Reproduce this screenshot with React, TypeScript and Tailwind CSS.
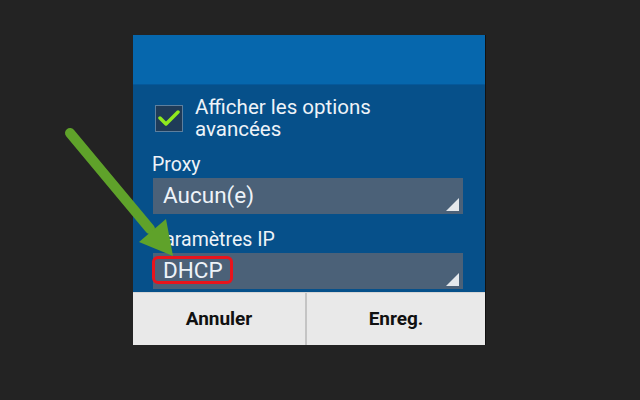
import React from 'react';

const Corner: React.FC = () => (
  <svg className="absolute right-[4px] bottom-[3px]" width="13" height="13" viewBox="0 0 13 13">
    <polygon points="13,0 13,13 0,13" fill="#e4e8ec" />
  </svg>
);

const App: React.FC = () => {
  return (
    <div
      className="relative w-[640px] h-[400px] bg-[#232323] pt-[35px] pl-[133px]"
      style={{ fontFamily: 'Roboto, "Noto Sans", sans-serif' }}
    >
      <div className="w-[352px] flex flex-col shadow-[1px_0_0_#111]">
        <div className="h-[50px] bg-[#0667ad] border-b border-[#05589a]" />
        <div className="h-[207px] bg-[#06508a] px-[20px] pt-[11px] flex flex-col text-[#eef3f8]">
          <div className="flex items-center h-[44px]">
            <div className="w-[28px] h-[27px] ml-[2px] bg-[#1f3b58] border border-[#5d7f9e] flex items-center justify-center">
              <svg width="22" height="18" viewBox="0 0 22 18">
                <polyline points="2,9 8,15 20,3" fill="none" stroke="#8fea1e" strokeWidth="3.5" strokeLinecap="round" strokeLinejoin="round" />
              </svg>
            </div>
            <div className="ml-[12px] text-[20.5px] leading-[22px]">
              Afficher les options
              <br />
              avancées
            </div>
          </div>
          <div className="mt-[15px] h-[20px] text-[19.5px] leading-[20px] -ml-[1px]">Proxy</div>
          <div className="relative mt-[3px] h-[36px] w-[310px] bg-[#4b6178] flex items-center pl-[10px] text-[22.5px]">
            Aucun(e)
            <Corner />
          </div>
          <div className="mt-[16px] h-[20px] text-[19.5px] leading-[20px] -ml-[1px]">Paramètres IP</div>
          <div className="relative mt-[3px] h-[36px] w-[310px] bg-[#4b6178] flex items-center pl-[10px] text-[22.5px]">
            DHCP
            <div className="absolute left-[-1px] top-[3px] w-[81px] h-[28px] border-[3px] border-[#e8141c] rounded-[6px]" />
            <Corner />
          </div>
        </div>
        <div className="h-[53px] bg-[#e9e9e9] flex border-t border-[#d6d6d6]">
          <div className="w-[174px] flex items-center justify-center text-[19px] font-bold text-[#111] border-r-2 border-[#c4c4c4]">
            Annuler
          </div>
          <div className="flex-1 flex items-center justify-center text-[19px] font-bold text-[#111]">
            Enreg.
          </div>
        </div>
      </div>
      <svg className="absolute left-0 top-0 pointer-events-none" width="640" height="400" viewBox="0 0 640 400">
        <line x1="70" y1="133" x2="150" y2="229" stroke="#5fa22a" strokeWidth="10" strokeLinecap="round" />
        <polygon points="139,242 166,219 173,256" fill="#5fa22a" />
      </svg>
    </div>
  );
};

export default App;
